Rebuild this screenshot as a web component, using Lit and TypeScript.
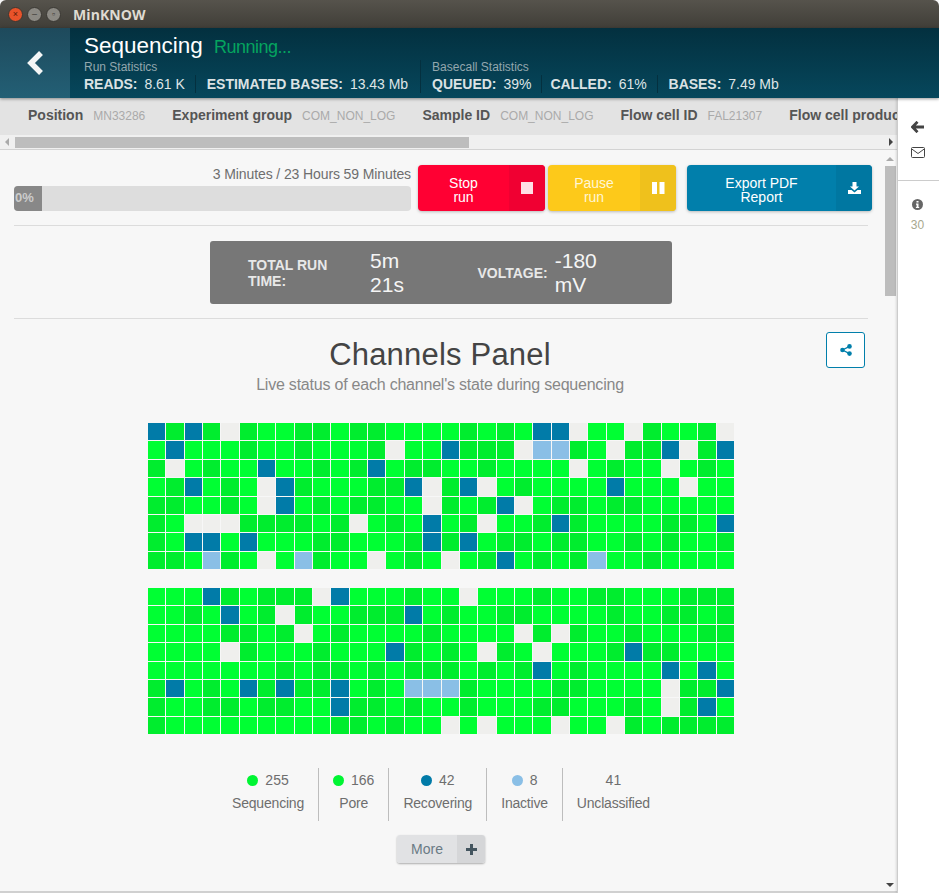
import { LitElement, html, css, svg } from "lit";
import { customElement } from "lit/decorators.js";

const G1 = [
  "BdBdWd..dd.dd...".concat(".d.d.BBW..Wd..dW"),
  ".B...d..d...dW..".concat("BdddWLLd.Wdd".concat("BWdB")),
  "dW.d..B..d.dB.dd".concat("..d....W.d..W.d."),
  ".dB.d.WBd...ddBW".concat("dBW.d....B...W.."),
  "dd..d.WB.d.dd..W".concat("d.dBW.dd.dd....."),
  "d.WWWdddd.dW.d.B".concat(".dW..dBd....dd.B"),
  "d.BB.B...dd...dB".concat("dB.dd.dd..d.d..d"),
  "dd.Ld.W.Ld..W.d.".concat("W.dB.d.dL..d...."),
];
const G2 = [
  "...Bd.dddWB...d.".concat(".W...d..dd...ddd"),
  "..d.B.dWd..dddB.".concat("d..dd....d..dd.d"),
  "....dd.dW.d....d".concat("....WdWd..d...dd"),
  "....Wd...d...Bd.".concat("d.Wd.W...dBdd..."),
  ".......d.dd.d.dd".concat("d.d.dB.d....B.B."),
  "dB.d.BdBddB.d.LL".concat("Ld....dd....WddB"),
  "d..dd.dd..Bdd.d.".concat(".d...dd...d.WdB."),
  "d.........dd.d..".concat("W.W...W..Wd.dddd"),
];

const I = {
  square: svg`<svg class="ic" width="12" height="12" viewBox="0 0 12 12"><rect width="12" height="12" fill="currentColor"/></svg>`,
  pause: svg`<svg class="ic" width="13" height="12" viewBox="0 0 13 12"><path d="M0 0h5v12H0zM7.500 0h5v12h-5z" fill="currentColor"/></svg>`,
  download: svg`<svg class="ic" width="13" height="12" viewBox="0 0 13 12"><path d="M4.500 0h4v4.500H11L6.500 8.500 2 4.500h2.500zM0 8h3.500l3 2.500 3-2.500H13v4H0z" fill="currentColor"/></svg>`,
  share: svg`<svg width="12" height="12" viewBox="0 0 12 12"><g fill="currentColor"><circle cx="2.500" cy="6" r="2.300"/><circle cx="9.500" cy="2.400" r="2.300"/><circle cx="9.500" cy="9.600" r="2.300"/></g><path d="M2.500 6l7-3.600M2.500 6l7 3.600" stroke="currentColor" stroke-width="1.300" fill="none"/></svg>`,
  plus: svg`<svg width="11" height="11" viewBox="0 0 11 11"><path d="M4 0h3v4h4v3H7v4H4V7H0V4h4z" fill="currentColor"/></svg>`,
  back: svg`<svg width="20" height="26" viewBox="0 0 20 26"><path d="M16 3L6 13l10 10" fill="none" stroke="currentColor" stroke-width="5.500"/></svg>`,
  arrow: svg`<svg width="13" height="12" viewBox="0 0 13 12"><path d="M6.500 .8L1.500 6l5 5.200M2 6H13" fill="none" stroke="currentColor" stroke-width="2.800"/></svg>`,
  mail: svg`<svg width="14" height="11" viewBox="0 0 14 11"><rect x=".5" y=".5" width="13" height="10" rx="1" fill="none" stroke="currentColor"/><path d="M.8 2l6.200 4.500L13.200 2" fill="none" stroke="currentColor"/></svg>`,
  info: svg`<svg width="11" height="11" viewBox="0 0 11 11"><circle cx="5.500" cy="5.500" r="5.500" fill="currentColor"/><path d="M4.500 2h2v1.600h-2zM4 4.600h2.500v3.300h.7v1.200H3.900V7.900h.7V5.800H4z" fill="#fff"/></svg>`,
};

@customElement("app-root")
export class AppRoot extends LitElement {
  static styles = css`
    :host { display: block; width: 939px; height: 893px; overflow: hidden; background: #f7f7f7; font-family: "Liberation Sans", sans-serif; }
    .title { height: 28px; background: linear-gradient(#56534c, #403e38); display: flex; align-items: center; padding-left: 8px; border-radius: 6px 6px 0 0; box-sizing: border-box; }
    .wb { width: 15px; height: 15px; border-radius: 50%; margin-right: 4px; background: #8c8a84; border: 1px solid #3a3833; box-sizing: border-box; display: flex; align-items: center; justify-content: center; color: #3c3b37; font-size: 9px; line-height: 1; }
    .wb.close { background: #e9532a; color: #5a1a08; }
    .appname { margin-left: 8px; color: #dfdbd2; font: bold 14px "Open Sans", sans-serif; letter-spacing: .1px; }
    .head { height: 70px; display: flex; background: linear-gradient(#03303f, #06475c); position: relative; z-index: 2; box-shadow: 0 1px 3px rgba(0,0,0,.4); }
    .backb { width: 70px; background: linear-gradient(#1e4a5c, #235f75); color: #f4f6f6; display: flex; align-items: center; justify-content: center; padding-right: 1px; box-sizing: border-box; }
    .hbody { padding: 5px 0 0 14px; color: #dfe5e7; }
    .h1 { display: flex; align-items: baseline; height: 27px; }
    .h1 b { font-weight: 400; font-size: 22.500px; color: #fff; width: 130px; }
    .h1 span { font-size: 18px; color: #05a45f; letter-spacing: -.5px; }
    .hstats { display: flex; }
    .hgroup { display: flex; flex-direction: column; }
    .hgroup + .hgroup { border-left: 1px solid #04303f; margin-left: 12px; padding-left: 11px; }
    .hcap { font-size: 12px; color: #93a7ae; height: 15px; line-height: 15px; }
    .hrow { display: flex; height: 18px; align-items: center; font-size: 14px; white-space: nowrap; }
    .st { display: flex; gap: 7px; padding-right: 10px; margin-right: 11px; border-right: 1px solid #04303f; line-height: 18px; letter-spacing: -.03px; }
    .st.tight { margin-right: 8px; }
    .st:last-child { border: 0; margin: 0; padding: 0; }
    .st b { color: #dbe2e4; }
    .body { display: flex; height: 795px; }
    .main { width: 897px; display: flex; flex-direction: column; flex: none; }
    .strip { height: 37px; background: #e3e3e3; display: flex; align-items: center; padding: 0 0 4px 28px; gap: 27px; overflow: hidden; white-space: nowrap; flex: none; box-sizing: border-box; }
    .si { display: flex; align-items: baseline; gap: 10px; }
    .si b { font-size: 14px; color: #555; }
    .si span { font-size: 12px; color: #aaa; }
    .hs { height: 15px; background: #f0f0f0; border-bottom: 1px solid #d3d3d3; display: flex; align-items: center; box-sizing: border-box; flex: none; justify-content: space-between; }
    .hs i { display: block; width: 0; height: 0; border: 4px solid transparent; }
    .hs .l { border-right-color: #aaa; border-left-width: 0; margin-left: 5px; }
    .hs .r { border-left-color: #444; border-right-width: 0; margin-right: 4px; }
    .thumb { height: 11px; width: 454px; background: #bdbdbd; margin-left: 6px; margin-right: auto; }
    .cwrap { flex: 1; display: flex; min-height: 0; border-bottom: 2px solid #d0d0d0; }
    .content { width: 884px; box-sizing: border-box; padding: 15px 16px 0 14px; flex: none; }
    .vs { width: 13px; background: #f7f7f7; display: flex; flex-direction: column; align-items: center; }
    .vs .u { width: 0; height: 0; border: 4px solid transparent; border-bottom-color: #aaa; border-top-width: 0; margin-top: 7px; margin-left: -1px; }
    .vs .t { width: 11px; height: 130px; background: #bdbdbd; margin-top: 5px; margin-left: -1px; }
    .vs .d { width: 0; height: 0; border: 4px solid transparent; border-top-color: #444; border-bottom-width: 0; margin-top: auto; margin-bottom: 4px; margin-left: -1px; }
    .top { display: flex; height: 47px; }
    .prog { width: 397px; display: flex; flex-direction: column; align-items: stretch; flex: none; }
    .ptxt { text-align: right; font-size: 14px; color: #6e6e6e; height: 21px; line-height: 18px; letter-spacing: -.11px; }
    .pbar { height: 25px; background: #ddd; border-radius: 4px; overflow: hidden; }
    .pfill { width: 28px; height: 25px; background: #888; color: #ccc; font-weight: bold; font-size: 13px; line-height: 23px; padding-left: 1px; box-sizing: border-box; }
    .btn { display: flex; height: 46px; border-radius: 4px; overflow: hidden; color: #fff; font-size: 14px; line-height: 14px; text-align: center; box-shadow: 0 1px 3px rgba(0,0,0,.25); flex: none; }
    .btn .tx { flex: 1; display: flex; align-items: center; justify-content: center; padding: 4px 8px 0; box-sizing: border-box; }
    .btn .ico { width: 36px; display: flex; align-items: center; justify-content: center; }
    .stop { width: 127px; margin-left: 7px; background: #ff0033; } .stop .ico { background: #f00032; color: #ffdfe6; }
    .pause { width: 128px; margin-left: 3px; background: #fdc91a; color: #fff6d6; } .pause .ico { background: #efc11c; color: #fff; }
    .export { width: 185px; margin-left: 11px; background: #017fab; } .export .ico { background: #0077a1; color: #fff; }
    hr { border: 0; height: 1px; background: #dcdcdc; margin: 0; }
    .hr1 { margin-top: 13px; }
    .mbox { width: 462px; height: 63px; margin: 15px 0 14px 196px; background: #777; border-radius: 3px; display: flex; align-items: center; padding-left: 38px; box-sizing: border-box; color: #fff; }
    .mbox b { font-size: 14px; color: #e8e8e8; margin-right: 7px; }
    .mbox span { font-size: 21px; margin-right: 42px; color: #f5f5f5; }
    .panel { position: relative; text-align: center; padding-top: 18px; }
    .panel h2 { margin: 0; font-weight: 400; font-size: 31px; line-height: 36px; color: #444; margin-left: -2px; letter-spacing: .2px; }
    .panel p { margin: 1px 0 0; font-size: 16px; line-height: 22px; color: #888; margin-left: -2px; letter-spacing: -.22px; }
    .sharebtn { position: absolute; left: 812px; top: 13px; width: 39px; height: 36px; box-sizing: border-box; border: 1px solid #017fab; border-radius: 3px; background: #fff; color: #017fab; display: flex; align-items: center; justify-content: center; }
    .grids { margin: 27px 0 0 134px; width: 586px; }
    .grid { display: grid; grid-template-columns: repeat(32, 1fr); grid-template-rows: repeat(8, 1fr); gap: 1px; height: 146px; }
    .grid + .grid { margin-top: 19px; }
    .c { background: #00ff33; }
    .c.d { background: #00ed2e; }
    .c.B { background: #017ba8; }
    .c.W { background: #efefed; }
    .c.L { background: #8abfe6; }
    .legend { display: flex; justify-content: center; margin: 34px 0 0 0; }
    .li { padding: 0 14px; height: 53px; display: flex; flex-direction: column; align-items: center; border-right: 1px solid #bdbdbd; font-size: 14px; color: #6e6e6e; white-space: nowrap; box-sizing: border-box; }
    .li:last-child { border: 0; }
    .lv { display: flex; align-items: center; gap: 7px; height: 24px; }
    .dot { width: 11px; height: 11px; border-radius: 50%; }
    .lb { height: 22px; line-height: 22px; letter-spacing: -.2px; }
    .morew { display: flex; justify-content: center; margin: 14px 0 0 0; }
    .more { display: flex; width: 88px; height: 28px; border-radius: 3px; overflow: hidden; box-shadow: 0 1px 2px rgba(0,0,0,.3); font-size: 14px; color: #6a7a85; }
    .more span { flex: 1; background: #e1e2e4; text-align: center; line-height: 28px; }
    .more i { width: 28px; background: #d5d6d8; color: #44555f; display: flex; align-items: center; justify-content: center; }
    .side { width: 42px; background: #fff; border-left: 1px solid #ccc; box-shadow: -1px 0 2px rgba(0,0,0,.12); box-sizing: border-box; display: flex; flex-direction: column; align-items: center; flex: none; color: #444; position: relative; z-index: 1; }
    .s1 { height: 83px; width: 100%; border-bottom: 1px solid #ccc; display: flex; flex-direction: column; align-items: center; padding: 23px 2px 0 0; gap: 14px; box-sizing: border-box; flex: none; }
    .s1 svg { display: block; }
    .s2 { padding: 18px 2px 0 0; display: flex; flex-direction: column; align-items: center; gap: 8px; color: #666; }
    .s2 span { font-size: 12px; color: #a8a88e; }
  `;

  private grid(rows: string[]) {
    return html`<div class="grid">${rows.map((r) => [...r].map((ch) => html`<div class="c ${ch === "." ? "" : ch}"></div>`))}</div>`;
  }

  render() {
    const stat = (k: string, v: string, cls = "") => html`<div class="st ${cls}"><b>${k}</b><span>${v}</span></div>`;
    const info = (k: string, v: string) => html`<div class="si"><b>${k}</b><span>${v}</span></div>`;
    const leg = (c: string | null, v: string, l: string) => html`<div class="li"><div class="lv">${c ? html`<div class="dot" style="background:${c}"></div>` : ""}<span>${v}</span></div><div class="lb">${l}</div></div>`;
    return html`
      <div class="title">
        <div class="wb close">×</div><div class="wb">–</div><div class="wb">▫</div>
        <div class="appname">MinKNOW</div>
      </div>
      <div class="head">
        <div class="backb">${I.back}</div>
        <div class="hbody">
          <div class="h1"><b>Sequencing</b><span>Running...</span></div>
          <div class="hstats">
            <div class="hgroup"><div class="hcap">Run Statistics</div>
              <div class="hrow">${stat("READS:", "8.61 K")}${stat("ESTIMATED BASES:", "13.43 Mb")}</div></div>
            <div class="hgroup"><div class="hcap">Basecall Statistics</div>
              <div class="hrow">${stat("QUEUED:", "39%", "tight")}${stat("CALLED:", "61%")}${stat("BASES:", "7.49 Mb")}</div></div>
          </div>
        </div>
      </div>
      <div class="body">
        <div class="main">
          <div class="strip">
            ${info("Position", "MN33286")}${info("Experiment group", "COM_NON_LOG")}${info("Sample ID", "COM_NON_LOG")}${info("Flow cell ID", "FAL21307")}${info("Flow cell product code", "FLO-MIN106")}
          </div>
          <div class="hs"><i class="l"></i><div class="thumb"></div><i class="r"></i></div>
          <div class="cwrap">
            <div class="content">
              <div class="top">
                <div class="prog">
                  <div class="ptxt">3 Minutes / 23 Hours 59 Minutes</div>
                  <div class="pbar"><div class="pfill">0%</div></div>
                </div>
                <div class="btn stop"><div class="tx">Stop<br />run</div><div class="ico">${I.square}</div></div>
                <div class="btn pause"><div class="tx">Pause<br />run</div><div class="ico">${I.pause}</div></div>
                <div class="btn export"><div class="tx">Export PDF<br />Report</div><div class="ico">${I.download}</div></div>
              </div>
              <hr class="hr1" />
              <div class="mbox"><b>TOTAL RUN TIME:</b><span>5m 21s</span><b>VOLTAGE:</b><span>-180 mV</span></div>
              <hr />
              <div class="panel">
                <div class="sharebtn">${I.share}</div>
                <h2>Channels Panel</h2>
                <p>Live status of each channel's state during sequencing</p>
                <div class="grids">${this.grid(G1)}${this.grid(G2)}</div>
                <div class="legend">
                  ${leg("#00f533", "255", "Sequencing")}${leg("#00f533", "166", "Pore")}${leg("#017ba8", "42", "Recovering")}${leg("#8abfe6", "8", "Inactive")}${leg(null, "41", "Unclassified")}
                </div>
                <div class="morew"><div class="more"><span>More</span><i>${I.plus}</i></div></div>
              </div>
            </div>
            <div class="vs"><div class="u"></div><div class="t"></div><div class="d"></div></div>
          </div>
        </div>
        <div class="side">
          <div class="s1">${I.arrow}${I.mail}</div>
          <div class="s2">${I.info}<span>30</span></div>
        </div>
      </div>
    `;
  }
}
